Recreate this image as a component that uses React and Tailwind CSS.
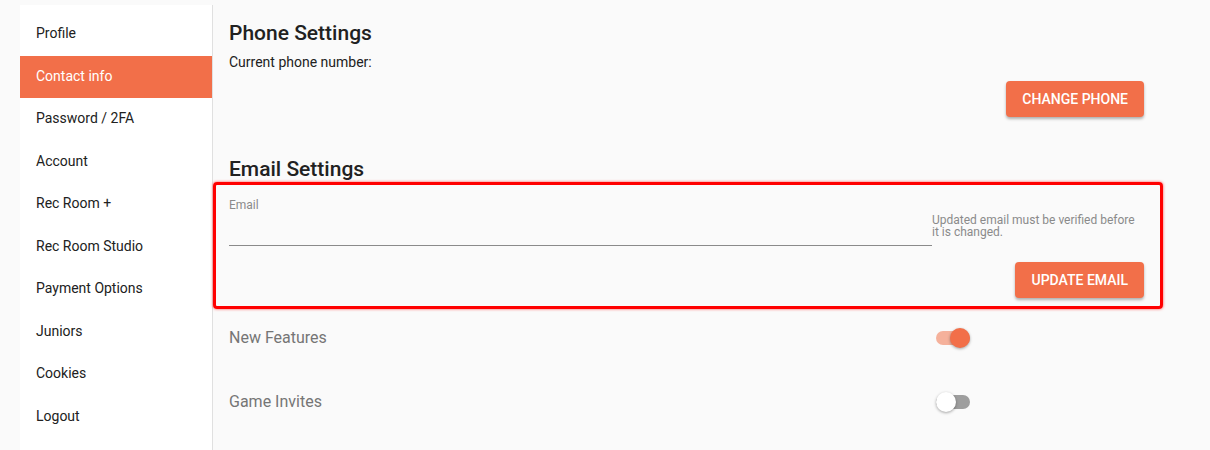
import React, { useState } from 'react';

const menuItems = [
    'Profile',
    'Contact info',
    'Password / 2FA',
    'Account',
    'Rec Room +',
    'Rec Room Studio',
    'Payment Options',
    'Juniors',
    'Cookies',
    'Logout',
];

// MUI-style switch
function Toggle({ checked, onChange }) {
    return (
        <button
            onClick={() => onChange(!checked)}
            className="relative w-[34px] h-[20px] flex items-center"
        >
            <span
                className={
                    'block w-[34px] h-[14px] rounded-full ' +
                    (checked ? 'bg-[#f5b19b]' : 'bg-[#9e9e9e]')
                }
            />
            <span
                className={
                    'absolute top-0 w-[20px] h-[20px] rounded-full shadow-[0_1px_3px_rgba(0,0,0,0.35)] ' +
                    (checked ? 'left-[14px] bg-[#f26f49]' : 'left-0 bg-white')
                }
            />
        </button>
    );
}

export default function App() {
    const [active, setActive] = useState('Contact info');
    const [email, setEmail] = useState('');
    const [newFeatures, setNewFeatures] = useState(true);
    const [gameInvites, setGameInvites] = useState(false);

    return (
        <div className="min-h-[450px] bg-[#fafafa] flex font-['Roboto',sans-serif] text-[#212121]">
            {/* Sidebar */}
            <div className="ml-[20px] mt-[5px] w-[193px] bg-white border-r border-[#e0e0e0] pt-[8px] h-[445px] shrink-0">
                {menuItems.map(item => (
                    <div
                        key={item}
                        onClick={() => setActive(item)}
                        className={
                            'h-[42.5px] flex items-center pl-[16px] pb-[1px] text-[14px] cursor-pointer ' +
                            (active === item ? 'bg-[#f26f49] text-white' : 'text-[#212121]')
                        }
                    >
                        {item}
                    </div>
                ))}
            </div>

            {/* Main content */}
            <div className="pl-[16px] pt-[19px] w-[931px]">
                <h2 className="text-[21px] leading-[28px] font-medium">Phone Settings</h2>
                <p className="mt-[5px] text-[14px] leading-[20px]">Current phone number:</p>
                <div className="flex justify-end mt-[9px]">
                    <button className="h-[36px] px-[16px] rounded-[4px] bg-[#f26f49] text-white text-[14px] font-medium uppercase shadow-[0_2px_3px_rgba(0,0,0,0.3)]">
                        Change Phone
                    </button>
                </div>

                <h2 className="mt-[38px] text-[21px] leading-[28px] font-medium">Email Settings</h2>

                <div className="relative mt-[14px]">
                    <div className="flex">
                        <div className="w-[703px] border-b border-[#8a8a8a]">
                            <label className="block text-[12px] leading-[16px] text-[#8a8a8a]">Email</label>
                            <input
                                value={email}
                                onChange={e => setEmail(e.target.value)}
                                className="w-full h-[32px] bg-transparent outline-none text-[16px]"
                            />
                        </div>
                        <p className="pt-[17px] w-[210px] text-[12px] leading-[12px] text-[#8a8a8a]">
                            Updated email must be verified before it is changed.
                        </p>
                    </div>
                    <div className="flex justify-end mt-[16px]">
                        <button className="h-[36px] px-[16px] rounded-[4px] bg-[#f26f49] text-white text-[14px] font-medium uppercase shadow-[0_2px_3px_rgba(0,0,0,0.3)]">
                            Update Email
                        </button>
                    </div>
                    {/* annotation highlight */}
                    <div className="absolute left-[-16px] top-[-15px] w-[950px] h-[127px] border-[3px] border-[#ff0000] rounded-[4px] shadow-[0_0_3px_rgba(255,0,0,0.7)] pointer-events-none" />
                </div>

                <div className="mt-[30px] flex items-center h-[20px]">
                    <span className="w-[707px] text-[16px] text-[#757575]">New Features</span>
                    <Toggle checked={newFeatures} onChange={setNewFeatures} />
                </div>
                <div className="mt-[44px] flex items-center h-[20px]">
                    <span className="w-[707px] text-[16px] text-[#757575]">Game Invites</span>
                    <Toggle checked={gameInvites} onChange={setGameInvites} />
                </div>
            </div>
        </div>
    );
}
